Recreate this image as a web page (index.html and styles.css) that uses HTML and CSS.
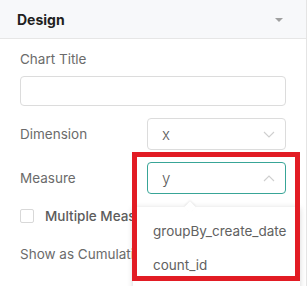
FILE: index.html
```html
<!DOCTYPE html>
<html lang="en">
<head>
    <meta charset="UTF-8">
    <meta name="viewport" content="width=device-width, initial-scale=1.0">
    <title>Design</title>
    <link rel="stylesheet" href="styles.css">
</head>

<body>
    <div class="panel">
        <div class="panel-head">
            <span class="panel-title">Design</span>
            <span class="panel-caret"></span>
        </div>

        <div class="panel-body">
            <div class="field">
                <div class="field-label">Chart Title</div>
                <div class="text-input"></div>
            </div>

            <div class="row">
                <div class="row-label">Dimension</div>
                <div class="select">
                    <span class="select-value">x</span>
                    <svg class="chevron" width="12" height="7" viewBox="0 0 12 7"><path d="M1 1l5 5 5-5" fill="none" stroke="#cfcfcf" stroke-width="1.1"/></svg>
                </div>
            </div>

            <div class="row">
                <div class="row-label">Measure</div>
                <div class="select open">
                    <span class="select-value">y</span>
                    <svg class="chevron" width="12" height="7" viewBox="0 0 12 7"><path d="M1 6l5-5 5 5" fill="none" stroke="#cfcfcf" stroke-width="1.1"/></svg>
                </div>
            </div>

            <div class="check-row">
                <span class="checkbox"></span>
                <span class="check-label">Multiple Measures</span>
            </div>

            <div class="plain-row">Show as Cumulative</div>
        </div>

        <div class="dropdown">
            <div class="dropdown-arrow"></div>
            <div class="dropdown-item">groupBy_create_date</div>
            <div class="dropdown-item">count_id</div>
        </div>

        <div class="highlight"></div>
    </div>
</body>
</html>
```

FILE: styles.css
```css
body {
  margin: 0;
  background: #fff;
  font-family: Inter, "Noto Sans", sans-serif;
  overflow: hidden;
}

.panel {
  position: relative;
  width: 306px;
  height: 286px;
  border-right: 1px solid #e4e4e4;
  overflow: hidden;
}

.panel-head {
  display: flex;
  align-items: center;
  justify-content: space-between;
  height: 38px;
  padding: 0 23px 0 17px;
  background: #f7f8fa;
  border-bottom: 1px solid #e6e6e6;
}

.panel-title {
  font-size: 14px;
  font-weight: 700;
  color: #1f1f1f;
}

.panel-caret {
  width: 0;
  height: 0;
  border-left: 4px solid transparent;
  border-right: 4px solid transparent;
  border-top: 4px solid #a0a0a0;
  margin-top: 2px;
}

.panel-body {
  padding: 0 20px;
  color: #6b6b6b;
  font-size: 13.5px;
}

.field-label {
  line-height: 20px;
  margin-top: 10px;
}

.text-input {
  height: 28px;
  margin-top: 7px;
  border: 1px solid #dcdcdc;
  border-radius: 4px;
}

.row {
  display: flex;
  align-items: center;
  margin-top: 12px;
}

.row-label {
  width: 127px;
  flex-shrink: 0;
}

.select {
  flex: 1;
  display: flex;
  align-items: center;
  justify-content: space-between;
  height: 30px;
  padding: 0 10px 0 14px;
  border: 1px solid #dcdcdc;
  border-radius: 4px;
  color: #5a5a5a;
}

.select.open {
  border-color: #38a597;
}

.select-value {
  font-size: 15px;
  font-weight: 300;
}

.check-row {
  display: flex;
  align-items: center;
  height: 20px;
  margin-top: 12px;
}

.checkbox {
  width: 12px;
  height: 12px;
  border: 1px solid #d8d8d8;
  border-radius: 2px;
  margin-right: 11px;
}

.check-label {
  font-weight: 500;
  color: #5c5c5c;
  white-space: nowrap;
}

.plain-row {
  line-height: 20px;
  margin-top: 18px;
  white-space: nowrap;
}

.dropdown {
  position: absolute;
  left: 133px;
  top: 207px;
  width: 167px;
  height: 100px;
  padding-top: 7px;
  background: #fff;
  box-shadow: 0 1px 6px rgba(0, 0, 0, 0.16);
  font-size: 13.5px;
  color: #616161;
}

.dropdown-arrow {
  position: absolute;
  left: 53px;
  top: -4px;
  width: 8px;
  height: 8px;
  background: #fff;
  transform: rotate(45deg);
  box-shadow: -1px -1px 2px rgba(0, 0, 0, 0.08);
}

.dropdown-item {
  height: 34px;
  line-height: 34px;
  padding-left: 20px;
  white-space: nowrap;
}

.highlight {
  position: absolute;
  left: 132px;
  top: 152px;
  width: 158px;
  height: 119px;
  border: 5px solid #e21c24;
}
```
